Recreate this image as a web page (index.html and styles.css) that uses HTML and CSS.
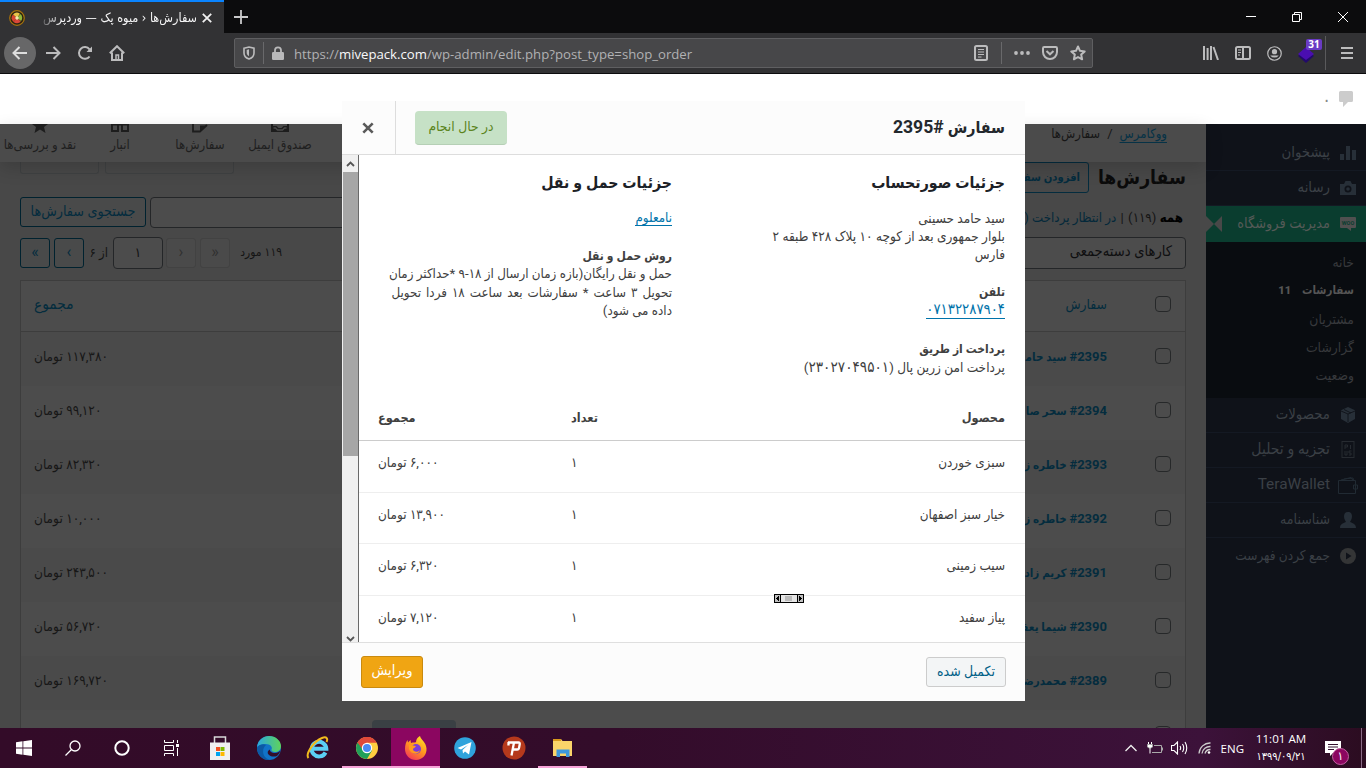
FILE: index.html
```html
<!DOCTYPE html>
<html lang="fa">
<head>
<meta charset="utf-8">
<title>سفارش‌ها ‹ میوه پک — وردپرس</title>
<link rel="stylesheet" href="styles.css">
</head>
<body>
<div class="screen">
  <header class="browser">
    <div class="tabstrip">
      <div class="tab">
        <svg class="favicon" width="18" height="18" viewBox="0 0 18 18"><circle cx="9" cy="9" r="7.3" fill="#2b2410" stroke="#a8730d" stroke-width="1.2"/><path d="M9 9 5 5.500A5.200 5.200 0 0 1 12 4.800z" fill="#e8c34a"/><path d="M9 9 5 5.500A5 5 0 0 0 5.500 13z" fill="#d8452f"/><path d="M9 9 12.500 5A5 5 0 0 1 13 12z" fill="#8fb83a"/><path d="M9 9 5.500 13A5 5 0 0 0 12.800 12.500z" fill="#d9473a"/><circle cx="9" cy="9" r="1.700" fill="#f3e7b0"/></svg>
        <span class="tab-title" dir="rtl">سفارش‌ها ‹ میوه پک — وردپرس</span>
        <svg class="tab-x" width="10" height="10" viewBox="0 0 10 10"><path d="M.8.8 9.200 9.200M9.200.8.8 9.200" stroke="#f0f0f0" stroke-width="1.800"/></svg>
      </div>
      <svg class="plus" width="14" height="14" viewBox="0 0 14 14"><path d="M7 0v14M0 7h14" stroke="#c9c9ca" stroke-width="1.800"/></svg>
      <div class="winctl">
        <svg width="10" height="12" viewBox="0 0 10 12"><path d="M0 5.500h10" stroke="#fff"/></svg>
        <svg width="10" height="10" viewBox="0 0 10 10"><path d="M.5 2.500h7v7h-7zM2.500 2.500v-2h7v7h-2" fill="none" stroke="#fff"/></svg>
        <svg width="10" height="10" viewBox="0 0 10 10"><path d="M0 0 10 10M10 0 0 10" stroke="#fff"/></svg>
      </div>
    </div>
    <div class="toolbar">
      <div class="navs">
        <span class="back"><svg width="16" height="16" viewBox="0 0 16 16" class="ln"><path d="M15 8H1.500M7.500 2 1.500 8l6 6"/></svg></span>
        <svg width="16" height="16" viewBox="0 0 16 16" class="ln"><path d="M1 8h13.500M8.500 2l6 6-6 6"/></svg>
        <svg width="16" height="16" viewBox="0 0 16 16" class="ln"><path d="M12.600 11.500A5.900 5.900 0 1 1 12.500 4.300"/><path d="M15 1.500V7H9.500z" fill="#bcbcbd" stroke="none"/></svg>
        <svg width="16" height="16" viewBox="0 0 16 16" class="ln"><path d="M.8 8.200 8 1.200l7.200 7M3 7.500V15h10V7.500" /><path d="M7 15v-5h2.500v5" stroke-width="1.500"/></svg>
      </div>
      <div class="urlbar">
        <svg width="12" height="14" viewBox="0 0 12 14" class="ln"><path d="M1 2.200 6 1l5 1.200V7c0 3-2 5-5 6-3-1-5-3-5-6z" stroke-width="1.600"/><path d="M6 3.300v7c-1.500-.8-2.300-2-2.300-3.500V3.900z" fill="#bcbcbd" stroke="none"/></svg>
        <i class="usep"></i>
        <svg class="lock" width="12" height="14" viewBox="0 0 12 14"><path d="M3 7V4.300a3 3 0 0 1 6 0V7" fill="none" stroke="#b9b9ba" stroke-width="1.800"/><rect y="6" width="12" height="8" rx="1.200" fill="#b9b9ba"/></svg>
        <span class="url">https://<b>mivepack.com</b>/wp-admin/edit.php?post_type=shop_order</span>
        <div class="uicons">
          <svg width="14" height="16" viewBox="0 0 14 16" class="ln"><rect x="1" y="1" width="12" height="14" rx="1.500"/><path d="M4 4.500h6M4 7h6M4 9.500h6M4 12h3.500" stroke-width="1"/></svg>
          <i class="usep s2"></i>
          <svg width="16" height="4" viewBox="0 0 16 4" fill="#bcbcbd"><circle cx="2" cy="2" r="1.900"/><circle cx="8" cy="2" r="1.900"/><circle cx="14" cy="2" r="1.900"/></svg>
          <svg width="16" height="14" viewBox="0 0 16 14" class="ln"><path d="M2.200 1h11.600Q15 1 15 2.200V6a7 7 0 0 1-14 0V2.200Q1 1 2.200 1zM4.500 5 8 8.300 11.500 5"/></svg>
          <svg width="16" height="16" viewBox="0 0 16 16" class="ln"><path d="m8 1.500 2 4.300 4.700.6-3.500 3.200.9 4.700L8 12l-4.100 2.300.9-4.700L1.300 6.400 6 5.800z" stroke-linejoin="round"/></svg>
        </div>
      </div>
      <div class="exts">
        <svg width="16" height="14" viewBox="0 0 16 14" class="ln"><path d="M1 0v14M4.600 2v12M8 0v14M10.500 1l4.500 13"/></svg>
        <svg width="16" height="14" viewBox="0 0 16 14" class="ln"><rect x="1" y="1" width="14" height="12" rx="1.500"/><path d="M8 1v12"/><path d="M3 4h3M3 6.500h3M3 9h2" stroke-width="1"/></svg>
        <svg width="15" height="15" viewBox="0 0 16 16" class="ln"><circle cx="8" cy="8" r="7.200" stroke-width="1.300"/><circle cx="8" cy="6" r="2.800" fill="#bcbcbd" stroke="none"/><path d="M3.500 10h9a5.500 5.500 0 0 1-9 0z" fill="#bcbcbd" stroke="none"/></svg>
        <span class="ext"><svg width="16" height="16" viewBox="0 0 16 16"><path d="m0 9 8-6 8 6-8 7z" fill="#220a6b"/><path d="m0 7 8-7 8 7-8 6z" fill="#4a0eb0"/></svg><em>31</em></span>
        <i class="tsep"></i>
        <svg width="12" height="12" viewBox="0 0 12 12" class="ln"><path d="M0 1h12M0 6h12M0 11h12"/></svg>
      </div>
    </div>
  </header>

  <main class="page" dir="rtl">
    <div class="adminbar">
      <svg width="14" height="16" viewBox="0 0 14 16"><path d="M1.500 0h11Q14 0 14 1.500v8Q14 11 12.500 11H9l-5 5v-5H1.500Q0 11 0 9.500v-8Q0 0 1.500 0z" fill="#ccc"/></svg>
      <span>۰</span>
    </div>
    <div class="cols">
      <nav class="side">
        <a class="mi first"><svg width="16" height="16" viewBox="0 0 16 16"><path d="M0 9h4v6H0zM6 1h4v14H6zM12 5h4v10h-4z"/></svg><span>پیشخوان</span></a>
        <a class="mi"><svg width="16" height="14" viewBox="0 0 16 14"><path fill-rule="evenodd" d="M0 3h4l1.500-3h5L12 3h4v11H0zm8 1.500a3.500 3.500 0 1 0 0 7 3.500 3.500 0 0 0 0-7z"/><circle cx="8" cy="8" r="1.800"/></svg><span>رسانه</span></a>
        <a class="mi on"><svg width="16" height="16" viewBox="0 0 16 16"><path d="M1 1h14q1 0 1 1v9q0 1-1 1h-4v3l-4-3H1q-1 0-1-1V2q0-1 1-1z" fill="#505050"/><text x="8" y="9" text-anchor="middle" font-size="5.500" font-weight="700" font-family="Roboto" fill="#0a3d2f">WOO</text></svg><span>مدیریت فروشگاه</span><i class="arrow"></i></a>
        <div class="sub"><a>خانه</a><a class="cur">سفارشات<b>11</b></a><a>مشتریان</a><a>گزارشات</a><a>وضعیت</a></div>
        <a class="mi"><svg width="16" height="16" viewBox="0 0 16 16"><path d="m8 0 7 3.300v8.700L8 16l-7-4V3.300z"/><path d="m1 4 7 3 7-3M4 2.500l7 3.500M8 7v8" stroke="#0f1219" fill="none" stroke-width=".9"/></svg><span>محصولات</span></a>
        <a class="mi wide"><svg width="16" height="18" viewBox="0 0 16 18"><rect x="2" y=".5" width="12" height="16" fill="none" stroke="#272b31"/><path d="M5 8V4h2.500v2H5M10.500 4v4M5 10v4M7 10v4h-2M9 10h2.500M9 10v2h2v2H9" fill="none" stroke="#272b31"/></svg><span>تجزیه و تحلیل</span></a>
        <a class="mi"><svg class="wal" width="20" height="18" viewBox="0 0 20 18" ><path d="M.5 4.500h17v13H.5zM3 4l10-2.500 2 3M6 3l9-1 .5 2M15.500 9h4v4h-4z" fill="none" stroke="#212a33"/></svg><span class="lat">TeraWallet</span></a>
        <a class="mi id"><svg width="16" height="16" viewBox="0 0 16 16"><path d="M8 0c3 0 4 2 4 4.500S10.500 9 10 10c2 1 6 1.500 6 6H0c0-4.500 4-5 6-6-.5-1-2-3-2-5.500S5 0 8 0z"/></svg><span>شناسنامه</span></a>
        <a class="mi last"><svg width="16" height="16" viewBox="0 0 16 16"><circle cx="8" cy="8" r="8" fill="#343536"/><path d="m6 4.500 5.500 3.500L6 11.500z" fill="#0f1219"/></svg><span>جمع کردن فهرست</span></a>
      </nav>

      <section class="content">
        <div class="wchead">
          <div class="crumbs"><u>ووکامرس</u><span>/</span><span class="here">سفارش‌ها</span></div>
          <div class="tabs">
            <div class="t1"><svg width="20" height="9" viewBox="0 0 20 9"><path d="M1 0v8h18V0h-2v2h-3.500l-2 2h-3l-2-2H3V0z" fill-rule="evenodd"/><path d="M3.500 4h2l2 2h5l2-2h2" stroke="#4b4b4b" fill="none" stroke-width="1.300"/></svg>صندوق ایمیل</div>
            <div class="t2"><svg width="16" height="9" viewBox="0 0 16 9"><path d="M1 0v7.500h7L15 1" fill="none" stroke="#1d1d1d" stroke-width="1.800"/><path d="M8 7.500V1.500h7z"/></svg>سفارش‌ها</div>
            <div class="t3"><svg width="20" height="9" viewBox="0 0 20 9"><path d="M2 0v7h6V0M12 0v7h6V0M1 .5h18" fill="none" stroke="#1d1d1d" stroke-width="1.900"/></svg>انبار</div>
            <div class="t4"><svg width="16" height="9" viewBox="0 0 16 9"><path d="M0 0h16l-4 3 1.500 6L8 5.500 2.500 9 4 3z"/></svg>نقد و بررسی‌ها</div>
          </div>
        </div>
        <div class="work">
          <div class="titlerow"><h1>سفارش‌ها</h1><a class="add">افزودن سفا</a><span class="cut c1"></span><span class="cut c2"></span></div>
          <div class="row2">
            <div class="subsub"><b>همه</b> <span>(۱۱۹)</span> <span class="bar">|</span> <i>در انتظار پرداخت (</i></div>
            <span class="input search"></span><span class="btn sbtn">جستجوی سفارش‌ها</span>
          </div>
          <div class="row3">
            <span class="input bulk">کارهای دسته‌جمعی</span>
            <span class="count">۱۱۹ مورد</span><span class="btn off">«</span><span class="btn off">‹</span><span class="input pg">۱</span><span class="of">از ۶</span><span class="btn nx">›</span><span class="btn lastp">»</span>
          </div>
          <div class="table">
            <div class="tr th"><i class="cb"></i><span class="nm">سفارش</span><span class="tot">مجموع</span></div>
            <div class="tr alt"><i class="cb"></i><b class="nm"><span>#2395</span> سید حام‍</b><span class="tot">۱۱۷,۳۸۰ تومان</span></div>
            <div class="tr"><i class="cb"></i><b class="nm"><span>#2394</span> سحر صا</b><span class="tot">۹۹,۱۲۰ تومان</span></div>
            <div class="tr alt"><i class="cb"></i><b class="nm"><span>#2393</span> خاطره ز</b><span class="tot">۸۲,۳۲۰ تومان</span></div>
            <div class="tr"><i class="cb"></i><b class="nm"><span>#2392</span> خاطره ز</b><span class="tot">۱۰,۰۰۰ تومان</span></div>
            <div class="tr alt"><i class="cb"></i><b class="nm"><span>#2391</span> کریم زاد</b><span class="tot">۲۴۳,۵۰۰ تومان</span></div>
            <div class="tr"><i class="cb"></i><b class="nm"><span>#2390</span> شیما یعق‍</b><span class="tot">۵۶,۷۲۰ تومان</span></div>
            <div class="tr alt"><i class="cb"></i><b class="nm"><span>#2389</span> محمدرض‍</b><span class="tot">۱۶۹,۷۲۰ تومان</span></div>
            <div class="tr"><i class="cb"></i><span class="chip"></span></div>
          </div>
        </div>
      </section>
    </div>

    <div class="modal">
      <div class="mhead">
        <h2>سفارش <span>#2395</span></h2>
        <span class="status">در حال انجام</span>
        <span class="close"><svg width="12" height="12" viewBox="0 0 12 12"><path d="m1.300 1.300 9.400 9.400M10.700 1.300l-9.400 9.400" stroke="#5a5a5a" stroke-width="2.600"/></svg></span>
      </div>
      <div class="mbody">
        <div class="inner">
          <div class="details">
            <div class="dcol">
              <h3>جزئیات صورتحساب</h3>
              <p>سید حامد حسینی<br>بلوار جمهوری بعد از کوچه ۱۰ پلاک ۴۲۸ طبقه ۲<br>فارس</p>
              <p class="p2"><b>تلفن</b><br><a class="num">۰۷۱۳۲۲۸۷۹۰۴</a></p>
              <p class="p3"><b>پرداخت از طریق</b><br>پرداخت امن زرین پال (<span class="num">۲۳۰۲۷۰۴۹۵۰۱</span>)</p>
            </div>
            <div class="dcol">
              <h3>جزئیات حمل و نقل</h3>
              <p><a>نامعلوم</a></p>
              <p class="p4"><b>روش حمل و نقل</b><br>حمل و نقل رایگان(بازه زمان ارسال از ۱۸-۹ *حداکثر زمان<br><span class="loose">تحویل ۳ ساعت * سفارشات بعد ساعت ۱۸ فردا تحویل</span><br>داده می شود)</p>
            </div>
          </div>
          <div class="items">
            <div class="ir ih"><span>محصول</span><span>تعداد</span><span>مجموع</span></div>
            <div class="ir"><span>سبزی خوردن</span><span>۱</span><span>۶,۰۰۰ تومان</span></div>
            <div class="ir"><span>خیار سبز اصفهان</span><span>۱</span><span>۱۳,۹۰۰ تومان</span></div>
            <div class="ir"><span>سیب زمینی</span><span>۱</span><span>۶,۳۲۰ تومان</span></div>
            <div class="ir"><span>پیاز سفید</span><span>۱</span><span>۷,۱۲۰ تومان</span></div>
          </div>
        </div>
        <div class="sbar">
          <svg width="9" height="6" viewBox="0 0 9 6"><path d="M1 5 4.500 1.500 8 5" fill="none" stroke="#555" stroke-width="1.800"/></svg>
          <i class="thumb"></i>
          <svg width="9" height="6" viewBox="0 0 9 6"><path d="M1 1 4.500 4.500 8 1" fill="none" stroke="#555" stroke-width="1.800"/></svg>
        </div>
      </div>
      <div class="mfoot"><span class="done">تکمیل شده</span><span class="edit">ویرایش</span></div>
      <svg class="grip" width="30" height="9" viewBox="0 0 30 9" shape-rendering="crispEdges"><path d="M0 0h30v9H0z"/><path d="M1 1h5v7H1zM24 1h5v7h-5z" fill="#c0c0c0"/><path d="M7 1h16v7H7z" fill="#e6e6e6"/><path d="M11 2h7v5h-7z" fill="#bbb"/><path d="M5 1.500v6L2 4.500zM25 1.500v6l3-3z"/></svg>
    </div>
  </main>

  <footer class="taskbar">
    <div class="apps">
      <span><svg width="16" height="16" viewBox="0 0 16 16" fill="#fff"><path d="M0 2.200 6.500 1.300v6.300H0zM7.300 1.200 16 0v7.600H7.300zM0 8.400h6.500v6.300L0 13.800zM7.300 8.400H16V16l-8.700-1.200z"/></svg></span>
      <span><svg width="16" height="16" viewBox="0 0 16 16" fill="none" stroke="#fff" stroke-width="1.300"><circle cx="10" cy="6" r="5"/><path d="M6.500 9.500.5 15.500"/></svg></span>
      <span><svg width="16" height="16" viewBox="0 0 16 16" fill="none" stroke="#fff" stroke-width="2"><circle cx="8" cy="8" r="6.700"/></svg></span>
      <span><svg width="16" height="16" viewBox="0 0 16 16" fill="none" stroke="#fff"><path d="M1.500 0v2.500h9V0M1.500 5.500h9v5h-9zM1.500 16v-2.500h9V16M14.500 0v3M14.500 8v8"/><path d="M13 4h3v3h-3z" fill="#fff" stroke="none"/></svg></span>
      <span><svg width="22" height="24" viewBox="0 0 22 24"><path d="M5.500 8V1h11v7" fill="none" stroke="#d8d8d8" stroke-width="1.500"/><path d="M1 6.500h20V24H1z" fill="#f0f0f0"/><path d="M7 11h4v4H7z" fill="#f25022"/><path d="M11.500 11h4v4h-4z" fill="#7fba00"/><path d="M7 16h4v4H7z" fill="#00a4ef"/><path d="M11.500 16h4v4h-4z" fill="#ffb900"/></svg></span>
      <span><svg width="24" height="24" viewBox="0 0 24 24"><defs><linearGradient id="eg" x1="0" x2="1"><stop offset="0" stop-color="#2aa7e0"/><stop offset="1" stop-color="#5fd35b"/></linearGradient></defs><circle cx="12" cy="12" r="12" fill="#1173c8"/><path d="M0 11C1 4 6 0 12 0c7 0 12 5 12 10 0 4-3 6-6 6-2.500 0-4-1-3.500-2.500C16 11 13 8 9 8c-4 0-8 2-9 3z" fill="url(#eg)"/><path d="M13 13.500c-.5 2 2 3.500 5 3.500 2.500 0 4-1 5.500-2.500-.8 2.500-2 4-3.500 5.500-2.500 1-6 1-8.500-1.500-1.500-1.500-1-4 1.500-5z" fill="#330f2b"/><path d="M9 9c-4 3-5 12 4 14.900C5 24.500 0 18 0 12c1-3 6-5 9-3z" fill="#0c59a4"/></svg></span>
      <span><svg width="24" height="24" viewBox="0 0 24 24" fill="none"><path d="M19.500 16.500a7.300 7.300 0 1 1 .8-3.800H7" stroke="#5bd0f5" stroke-width="4"/><path d="M2.500 22C-1 18 8 5 16 2c5-2 6 1 4.500 4" stroke="#f2bb1d" stroke-width="2"/></svg></span>
      <span class="run"><svg width="22" height="22" viewBox="0 0 22 22"><circle cx="11" cy="11" r="11" fill="#ffcd40"/><path d="M1.500 5.500A11 11 0 0 1 20.500 5.500H11z" fill="#e0493a"/><path d="M1.500 5.500A11 11 0 0 0 11 22l5-8.500L11 11z" fill="#21a05a"/><path d="M1.500 5.500A11 11 0 0 1 20.500 5.500H11L7 13z" fill="#df4a3a"/><circle cx="11" cy="11" r="5.200" fill="#fff"/><circle cx="11" cy="11" r="4" fill="#4a8af4"/></svg></span>
      <span class="run act"><svg width="22" height="24" viewBox="0 0 22 24"><defs><linearGradient id="ff" x1=".8" y1="0" x2=".2" y2="1"><stop offset="0" stop-color="#ffe226"/><stop offset=".5" stop-color="#ff9320"/><stop offset="1" stop-color="#f5325b"/></linearGradient></defs><path d="M15 0c1 4 6 6 6.500 12.500C22 19 17 24 11 24S0 19.500 0 13C0 9 1 6 2.500 4L3 6.500 5.500 4 6 7c2-1 4 0 5-1 0-3 2-5 4-6z" fill="url(#ff)"/><circle cx="11" cy="13" r="5" fill="#7b3bd9"/><path d="M4 9c3-1 4 1 7 1-1 2-3 2-3 3 0 3 5 4 7 1-1 5-9 5-11-1z" fill="#ff9a1e"/></svg></span>
      <span><svg width="22" height="22" viewBox="0 0 22 22"><circle cx="11" cy="11" r="10.800" fill="#2fa3dc"/><path d="m3.500 11 14-6-2.500 12.500-4-3-2 2-.5-3.500L14 8l-7 4.500z" fill="#fff"/></svg></span>
      <span><svg width="24" height="24" viewBox="0 0 24 24"><circle cx="12" cy="12" r="11.500" fill="#b5391c"/><path d="M6 6.500h10.500q1.500 0 1.200 1.700l-.6 3.400q-.3 1.900-2 1.900H10M12 6.500 9.500 19.500M6.500 6v3.500" fill="none" stroke="#fff" stroke-width="2.300"/></svg></span>
      <span class="run"><svg width="20" height="20" viewBox="0 0 20 20"><path d="M0 1h8l1.500 2H19v15H0z" fill="#fbd46a"/><path d="M0 1h8v2H0z" fill="#d99a1c"/><path d="M3.500 19v-7.500h13V19H13v-3.500H7V19z" fill="#3e98dc"/></svg></span>
    </div>
    <div class="tray">
      <svg class="y1" width="12" height="8" viewBox="0 0 12 8" fill="none" stroke="#eee" stroke-width="1.300"><path d="M.5 7 6 1.500 11.500 7"/></svg>
      <svg class="y2" width="16" height="12" viewBox="0 0 16 12" fill="none" stroke="#aaa"><path d="M7 3.500h7.500v7H5"/><path d="M15.500 5.500v3" /><path d="M1.500 0v3M4.500 0v3M3 5v6.500" stroke="#fff"/><path d="M.5 2.500h5V5L3 6.500.5 5z" fill="#fff"/></svg>
      <svg class="y3" width="17" height="14" viewBox="0 0 17 14" fill="none" stroke="#fff" stroke-width="1.100"><path d="M.5 4.500H3L6.500 1v12L3 9.500H.5zM9 5q1.300 2 0 4M11.500 3q2.500 4 0 8M14 1q3.500 6 0 12"/></svg>
      <svg class="y4" width="13" height="12" viewBox="0 0 13 12" fill="none" stroke="#ccc" stroke-width="1.300"><path d="M1 11.500A11 11 0 0 1 12.500 1M4 11.500a8 8 0 0 1 8.500-7M7 11.500a5.500 5.500 0 0 1 5.500-4"/><circle cx="11" cy="10.500" r="1.300" fill="#fff" stroke="none"/></svg>
      <span class="eng">ENG</span>
      <span class="clock"><span>11:01 AM</span><span class="date">۱۳۹۹/۰۹/۲۱</span></span>
      <span class="note"><svg width="16" height="15" viewBox="0 0 16 15"><path d="M0 0h16v12H8l-3 3v-3H0z" fill="#fff"/><path d="M3 3.500h10M3 6h10M3 8.500h6" stroke="#35102e"/></svg><em>۱</em></span>
      <i class="peek"></i>
    </div>
  </footer>
</div>
</body>
</html>
```
FILE: styles.css
```css
* { box-sizing: border-box; }
body { margin: 0; font-family: Roboto, "DejaVu Sans Condensed", "DejaVu Sans", sans-serif; font-size: 13px; overflow: hidden; }
svg { display: block; flex: none; }
i, em { font-style: normal; }
.screen { width: 1366px; height: 768px; display: flex; flex-direction: column; overflow: hidden; white-space: nowrap; }
.ln { fill: none; stroke: #bcbcbd; stroke-width: 2; }

/* browser chrome */
.browser { height: 74px; flex: none; background: #323234; border-bottom: 1px solid #0c0c0d; }
.tabstrip { height: 33px; background: #0c0c0d; display: flex; align-items: center; }
.tab { width: 224px; height: 33px; background: #323234; border-top: 2px solid #0a84ff; display: flex; align-items: center; padding-left: 8px; }
.tab-title { color: #f5f5f6; font-family: "DejaVu Sans Condensed", "DejaVu Sans", sans-serif; font-size: 12.500px; width: 160px; margin-left: 11px; direction: rtl; -webkit-mask-image: linear-gradient(to right, transparent, #000 24px); }
.tab-x { margin-left: 5px; }
.plus { margin-left: 10px; }
.winctl { margin-left: auto; display: flex; align-items: center; gap: 36px; padding-right: 18px; }
.toolbar { height: 40px; display: flex; align-items: center; }
.navs { display: flex; align-items: center; gap: 16px; padding-left: 4px; width: 234px; }
.back { width: 32px; height: 32px; border-radius: 50%; background: #676768; display: flex; align-items: center; justify-content: center; margin-right: -7px; }
.back .ln { stroke: #dedede; }
.urlbar { width: 859px; height: 30px; background: #474749; border: 1px solid #5f5f61; border-radius: 2px; display: flex; align-items: center; padding-left: 8px; }
.usep { width: 1px; height: 22px; background: #69696b; margin: 0 8px; }
.lock { margin-right: 10px; }
.url { font-family: "Open Sans", "Noto Sans", sans-serif; font-size: 13.180px; padding-top: 1px; color: #b1b1b3; }
.url b { color: #f9f9fa; font-weight: 400; }
.uicons { margin-left: auto; display: flex; align-items: center; padding-right: 6px; gap: 12px; }
.uicons .s2 { margin: 0 0 0 1px; }
.exts { margin-left: auto; display: flex; align-items: center; gap: 16px; padding-right: 13px; }
.ext { position: relative; margin-top: 3px; }
.ext em { position: absolute; left: 8px; top: -8px; background: #6a3bc4; color: #fff; font: 700 10px/11px "Open Sans", sans-serif; width: 16px; text-align: center; border-radius: 2px; }
.tsep { width: 1px; height: 34px; background: #5a5a5c; margin: 0 -1px 0 -5px; }

/* admin page */
.page { height: 654px; position: relative; background: #484848; overflow: hidden; }
.adminbar { height: 50px; background: #fff; display: flex; align-items: center; padding-right: 13px; gap: 8px; color: #888; font-size: 18px; }
.cols { display: flex; height: 604px; }
.side { width: 160px; background: #0f1219; color: #3b4046; font-size: 14.800px; padding-top: 12px; }
.mi { height: 35px; display: flex; align-items: center; padding-right: 10px; gap: 10px; border-bottom: 1px solid #141923; fill: #272f38; position: relative; }
.mi svg { width: 16px; }
.mi span { padding-bottom: 2px; }
.mi svg.wal { width: 20px; margin: 0 -2px; }
.mi.on { background: #0a3d2f; color: #555a57; height: 36px; border: 0; font-size: 14.400px; }
.mi.wide { font-size: 15.500px; }
.mi.id { font-size: 14px; }
.mi.last { border: 0; font-size: 13.500px; }
.mi .lat { font-size: 15.400px; }
.mi.on .arrow { position: absolute; left: 0; top: 10px; height: 16px; width: 16px; background: #484848; clip-path: polygon(0 0, 50% 50%, 100% 0, 100% 100%, 50% 50%, 0 100%); }
.sub { background: #090c10; height: 156px; padding: 7px 12px 0 0; color: #37393c; display: flex; flex-direction: column; }
.sub a { height: 28.300px; line-height: 26px; font-size: 13.800px; }
.sub .cur { color: #555; font-weight: 700; font-size: 11.500px; line-height: 27px; }
.sub b { font-size: 11px; margin-right: 11px; }
.content { width: 1206px; }
.wchead { height: 38px; background: #4b4b4b; box-shadow: 0 6px 18px rgba(0,0,0,.16); position: relative; display: flex; justify-content: space-between; padding: 0 39px 0 3px; color: #161616; }
.crumbs { line-height: 19px; display: flex; gap: 7px; }
.crumbs u { color: #063246; text-underline-offset: 4px; }
.tabs { display: flex; color: #1f1f1f; fill: #1d1d1d; font-size: 13.100px; }
.tabs div { display: flex; flex-direction: column; align-items: center; gap: 3px; line-height: 17px; }
.t1 { width: 66px; margin-left: 3px; } .t2 { width: 50px; margin-right: 19px; } .t3 { width: 20px; margin-right: 45px; } .t4 { width: 74px; margin-right: 33px; }
.work { padding: 0 20px; }
.titlerow { height: 30px; display: flex; align-items: center; }
h1 { margin: 0; font-size: 19.200px; color: #0b0b0b; width: 88px; }
.add { margin: 0 9px 0 auto; width: 140px; height: 31px; border: 1px solid #042c3e; border-radius: 3px; color: #042c3e; font-size: 11.200px; font-weight: 700; line-height: 29px; padding-right: 8px; }
.cut { border: 1px solid #3f4142; border-top: 0; border-radius: 0 0 3px 3px; height: 12px; align-self: flex-start; }
.c1 { width: 129px; margin-left: 6px; } .c2 { width: 79px; }
.row2 { display: flex; height: 30px; margin-top: 5px; align-items: center; }
.subsub { margin-left: auto; color: #141414; padding-right: 3px; margin-top: 11px; font-size: 13.200px; }
.subsub b { color: #000; } .subsub i { color: #04283a; } .subsub .bar { margin: 0 1px; }
.input { border: 1px solid #242628; border-radius: 4px; color: #0f0f10; background: #4c4c4c; display: flex; align-items: center; justify-content: center; }
.search { width: 280px; height: 31px; margin-left: 4px; }
.btn { border: 1px solid #00222f; border-radius: 3px; color: #042c3e; background: #494a4a; width: 30px; height: 30px; display: flex; align-items: center; justify-content: center; }
.sbtn { width: 126px; font-size: 14.200px; padding-bottom: 3px; }
.row3 { display: flex; height: 32px; margin-top: 10px; align-items: center; color: #141414; }
.bulk { width: 240px; height: 32px; justify-content: flex-start; padding: 0 13px 4px 0; margin-left: auto; font-size: 14.600px; }
.count { margin-left: 11px; font-size: 12px; width: 41px; padding-bottom: 2px; }
.btn.off { border-color: #424242; color: #303030; background: #4a4a4a; margin-left: 4px; }
.btn.off + .btn.off { margin-left: 3px; }
.row3 .pg { width: 50px; height: 32px; margin-left: 5px; padding-bottom: 2px; }
.of { width: 19px; margin-left: 5px; padding-bottom: 2px; }
.nx { margin-left: 4px; }
.btn.nx, .btn.lastp, .btn.off { font-size: 16px; padding-bottom: 3px; }
.table { margin-top: 11px; border: 1px solid #3d3d3d; background: #4c4c4c; }
.tr { height: 54px; display: flex; align-items: center; padding: 0 14px 6px 13px; color: #171717; font-size: 13.500px; }
.tr.th { height: 51px; border-bottom: 1px solid #3d3d3d; color: #042c3e; padding-bottom: 4px; font-size: 13.800px; }
.tr.th .tot { font-size: 15.300px; }
.alt { background: #4a4a4a; }
.cb { width: 16px; height: 16px; border: 1px solid #262829; border-radius: 4px; margin-left: 48px; }
.nm { color: #042c3e; }
b.nm { font-size: 11.500px; }
b.nm span { font-size: 13px; }
.tot { margin-right: auto; }
.chip { width: 84px; height: 30px; background: #3a4044; border-radius: 4px; margin: 10px auto -10px 338px; align-self: flex-start; }

/* order preview */
.modal { position: absolute; left: 342px; top: 27px; width: 683px; height: 600px; background: #fff; display: flex; flex-direction: column; }
.mhead { height: 54px; background: #fcfcfc; border-bottom: 1px solid #ddd; display: flex; align-items: center; flex: none; }
h2 { margin: 0 20px 0 auto; font-size: 15.800px; color: #23282d; line-height: 22px; }
h2 span { font-size: 17.600px; }
.status { width: 92px; height: 34px; background: #c6e1c6; color: #5b841b; border-radius: 4px; border-bottom: 1px solid #b5cfb5; display: flex; align-items: center; justify-content: center; margin-left: 19px; font-size: 13.800px; padding-bottom: 3px; }
.close { width: 54px; height: 53px; border-right: 1px solid #ddd; display: flex; align-items: center; justify-content: center; padding-right: 2px; }
.mbody { flex: 1; display: flex; overflow: hidden; min-height: 0; }
.inner { width: 666px; }
.sbar { width: 17px; background: #f0f0f0; border-right: 1px solid #696969; display: flex; flex-direction: column; align-items: center; padding: 6px 0 0; }
.thumb { width: 15px; height: 284px; background: #a6a6a6; margin: 5px 0 auto; }
.details { display: flex; padding: 18px 20px 0 0; height: 236px; }
.dcol { width: 333px; flex: none; color: #404040; line-height: 18.200px; font-size: 13.500px; }
.dcol + .dcol { font-size: 13.280px; width: 313px; }
h3 { margin: 0 0 17px; font-size: 15.750px; line-height: 19px; color: #1d2126; }
.dcol p { margin: 0; }
.dcol b { font-size: 12px; }
.dcol .p2 { margin-top: 19px; line-height: 17.500px; } .dcol .p4 { margin-top: 20px; } .dcol .p3 { margin-top: 20px; line-height: 18px; }
.dcol a { color: #0073aa; border-bottom: 1px solid #0073aa; }
.dcol .num { font-size: 14.800px; line-height: 14px; }
.dcol .p3 .num { font-size: 15.200px; }
.loose { word-spacing: 1.700px; }
.ir { display: flex; height: 51.700px; border-bottom: 1px solid #eee; align-items: center; color: #404040; padding: 0 20px 8px 19px; font-size: 13.400px; }
.ir span { width: 406px; } .ir span + span { width: 28px; text-align: left; } .ir span + span + span { width: 193px; }
.ih { font-weight: 700; height: 50px; border-color: #ccc; padding-top: 3px; padding-bottom: 0; font-size: 12.600px; }
.mfoot { height: 59px; flex: none; background: #fcfcfc; border-top: 1px solid #dfdfdf; display: flex; justify-content: space-between; align-items: center; padding: 0 19px 1px; }
.done { width: 80px; height: 30px; background: #f3f5f6; border: 1px solid #ccc; border-radius: 3px; color: #016087; display: flex; align-items: center; justify-content: center; font-size: 13.900px; padding-bottom: 2px; }
.edit { width: 62px; height: 32px; background: #f0a513; border: 1px solid #c98a10; border-radius: 3px; color: #fff; display: flex; align-items: center; justify-content: center; font-size: 14.500px; padding-bottom: 3px; }
.grip { position: absolute; left: 432px; top: 493px; }

/* taskbar */
.taskbar { height: 40px; flex: none; background: linear-gradient(90deg, #330b28 0%, #330c2a 45%, #3c123a 88%, #2b0c20 100%); display: flex; justify-content: space-between; color: #fff; }
.apps { display: flex; margin-left: -1px; }
.apps span { width: 49.040px; height: 40px; display: flex; align-items: center; justify-content: center; }
.apps .run { box-shadow: inset 0 -2px #f7a3d8; }
.apps .act { background: #8b0660; }
.tray { display: flex; align-items: center; font-size: 12px; }
.eng { font-family: "Open Sans", sans-serif; font-size: 11.500px; }
.y1 { margin-right: 10px; } .y2 { margin-right: 8px; } .y3 { margin-right: 10px; } .y4 { margin-right: 10px; }
.clock { display: flex; flex-direction: column; align-items: center; width: 54px; margin: 0 17px 0 10px; line-height: 18px; font-family: "Open Sans", "DejaVu Sans Condensed", "DejaVu Sans", sans-serif; font-size: 11.600px; }
.date { font-size: 11px; font-family: "DejaVu Sans Condensed", "DejaVu Sans", sans-serif; }
.note { position: relative; margin-right: 20px; }
.note em { position: absolute; left: 7px; top: 7px; width: 17px; height: 17px; border-radius: 50%; background: #8b0660; border: 1px solid #c060a0; text-align: center; line-height: 15px; }
.peek { width: 5px; height: 40px; border-left: 1px solid #8a6a85; }
```
